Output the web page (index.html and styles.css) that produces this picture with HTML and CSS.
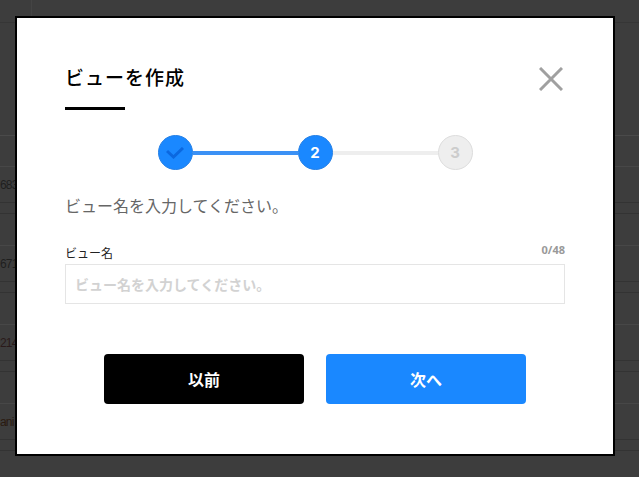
FILE: index.html
```html
<!DOCTYPE html>
<html lang="ja">
<head>
    <meta charset="UTF-8">
    <title>ビューを作成</title>
    <link rel="stylesheet" href="styles.css">
</head>
<body>
<div class="page">
    <div class="top-bar"><span class="top-cell"></span></div>
    <div class="head-row"></div>
    <div class="sub-row"></div>
    <div class="row"><div class="row-main">683</div><div class="row-gap"></div><div class="row-tail"></div></div>
    <div class="row"><div class="row-main">671</div><div class="row-gap"></div><div class="row-tail"></div></div>
    <div class="row"><div class="row-main row-red">214</div><div class="row-gap"></div><div class="row-tail"></div></div>
    <div class="row"><div class="row-main row-ani">ani</div><div class="row-gap"></div><div class="row-tail"></div></div>
</div>

<div class="modal">
    <div class="modal-head">
        <h1 class="modal-title">ビューを作成</h1>
        <button class="close-btn" type="button" aria-label="閉じる">
            <svg width="24" height="24" viewBox="0 0 24 24"><path d="M1 1L23 23M23 1L1 23" fill="none" stroke="#a0a0a0" stroke-width="3"/></svg>
        </button>
    </div>
    <div class="title-bar"></div>

    <ul class="steps">
        <li class="step step-done">
            <svg width="18" height="12" viewBox="0 0 18 12"><path d="M1 4L7.5 10L17 1" fill="none" stroke="#0b68e0" stroke-width="3"/></svg>
        </li>
        <li class="step-line step-line-on"></li>
        <li class="step step-now">2</li>
        <li class="step-line"></li>
        <li class="step step-next">3</li>
    </ul>

    <p class="guide">ビュー名を入力してください。</p>

    <div class="field-head">
        <label class="field-label" for="view-name">ビュー名</label>
        <span class="field-count">0/48</span>
    </div>
    <input class="field-input" id="view-name" type="text" placeholder="ビュー名を入力してください。">

    <div class="actions">
        <button class="btn btn-prev" type="button">以前</button>
        <button class="btn btn-next" type="button">次へ</button>
    </div>
</div>
</body>
</html>
```

FILE: styles.css
```css
html,body,div,ul,li,h1,p{margin:0;padding:0;}
ul{list-style-type:none;}
body{height:477px;overflow:hidden;background:#3d3d3d;font-family:"Noto Sans CJK JP","Noto Sans",sans-serif;}

/* dimmed table behind the dialog */
.page{color:#1f1f1f;font:12px/36px "Liberation Sans",sans-serif;letter-spacing:-.8px;}
.top-bar{height:22px;border-bottom:1px solid #363636;}
.top-cell{display:block;width:31px;height:22px;border-right:1px solid #444;}
.head-row{height:112px;border-bottom:1px solid #4a4a4a;}
.sub-row{height:30px;border-bottom:1px solid #474747;}
.row-main{height:35px;border-bottom:1px solid #333;}
.row-gap{height:10px;border-bottom:1px solid #333;}
.row-tail{height:31px;border-bottom:1px solid #474747;}
.row-red{color:#2a1a1a;}
.row-ani{color:#2a1a10;}

.modal{position:absolute;left:15px;top:16px;box-sizing:border-box;width:600px;height:440px;padding:0 48px;background:#fff;border:2px solid #000;}
.modal-head{display:flex;justify-content:space-between;height:89px;padding-top:44px;box-sizing:border-box;}
.modal-title{font-size:19px;line-height:30px;font-weight:500;color:#000;letter-spacing:1px;}
.close-btn{width:24px;height:24px;margin:5px 2px 0 0;padding:0;border:0;background:none;}
.close-btn svg{display:block;}
.title-bar{width:60px;height:3px;background:#000;}

.steps{display:flex;align-items:center;justify-content:center;margin-top:25px;}
.step{box-sizing:border-box;display:flex;align-items:center;justify-content:center;width:35px;height:35px;border-radius:50%;font:700 15px/1 Inter,"Noto Sans",sans-serif;}
.step-done{background:#1a88ff;border:1px solid #2580e6;}
.step-now{background:#1a88ff;border:1px solid #2580e6;color:#fff;}
.step-next{background:#eee;border:1px solid #ddd;color:#ccc;}
.step-line{width:105px;height:4px;background:#eee;}
.step-line-on{background:#3b91f5;}

.guide{margin-top:23px;font-size:16px;line-height:24px;color:#666;}

.field-head{display:flex;justify-content:space-between;margin-top:26px;height:20px;}
.field-label{font-size:12px;line-height:20px;color:#222;}
.field-count{font:700 11px/14px "Noto Sans",sans-serif;color:#999;}
.field-input{display:block;box-sizing:border-box;width:100%;height:40px;margin-top:1px;padding:0 9px;border:1px solid #e5e5e5;outline:0;background:#fff;font:700 14px "Noto Sans CJK JP",sans-serif;}
.field-input::placeholder{color:#d2d2d2;opacity:1;}

.actions{display:flex;justify-content:center;gap:22px;margin-top:50px;}
.btn{width:200px;height:50px;padding:0;border:0;border-radius:4px;color:#fff;font:700 16px "Noto Sans CJK JP",sans-serif;}
.btn-prev{background:#000;}
.btn-next{background:#1a88ff;}
```
